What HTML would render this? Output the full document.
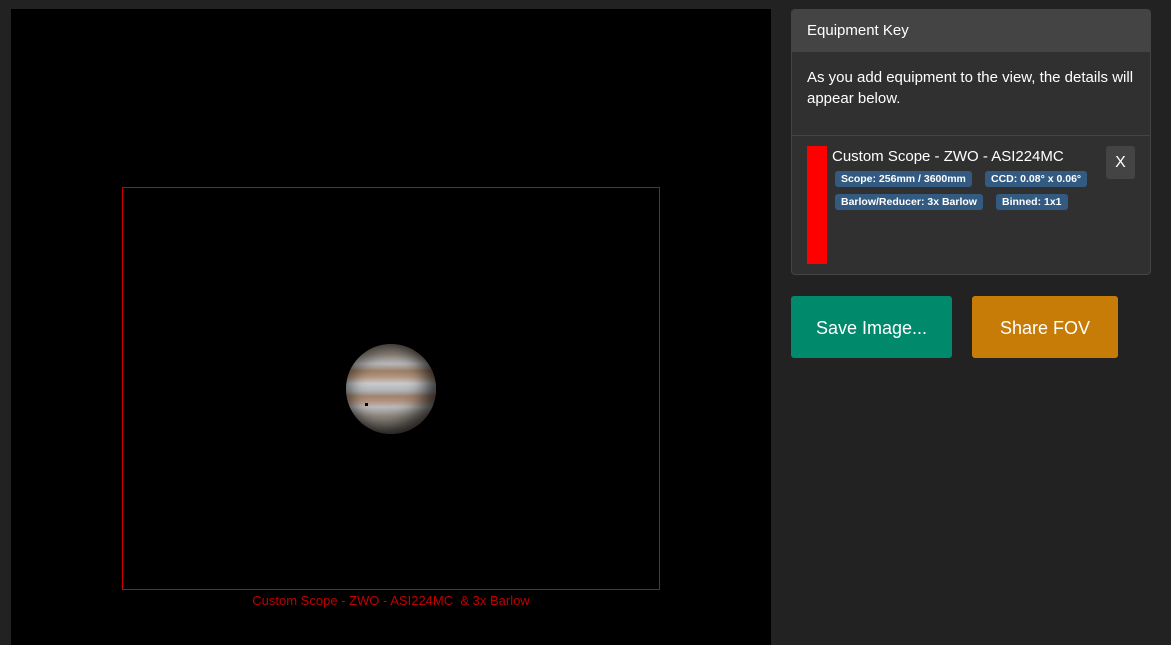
<!DOCTYPE html>
<html><head><style>
body{margin:0;width:1171px;height:645px;background:#222;font-family:"Liberation Sans",sans-serif;position:relative;overflow:hidden}
.cv{position:absolute;left:11px;top:9px;width:760px;height:636px;background:#000}
.fov{position:absolute;left:122px;top:187px;width:536px;height:401px;border:1px solid #d00000}
.lbl{position:absolute;left:122px;top:593px;width:538px;text-align:center;color:#c00000;font-size:13px}
.jup{position:absolute;left:346px;top:344px;width:90px;height:90px;border-radius:50%;
background:linear-gradient(180deg,#7a746c 0%,#948b80 12%,#b8b8bc 22%,#9c8068 30%,#b2927a 36%,#c8cacc 44%,#b0b2b6 52%,#a08470 58%,#b0907a 63%,#bcbcbc 70%,#969088 80%,#6d675f 100%);
box-shadow:inset -10px -6px 18px rgba(0,0,0,.7),inset 6px 4px 14px rgba(0,0,0,.4)}
.panel{position:absolute;left:791px;top:9px;width:358px;height:264px;background:#303030;border:1px solid #444;border-radius:4px;overflow:hidden;color:#fff}
.hd{height:42px;background:#444;line-height:42px;padding-left:15px;font-size:15px}
.desc{padding:15px 15px 16px;font-size:15px;line-height:21px;height:52px;border-bottom:1px solid #444}
.bar{position:absolute;left:15px;top:136px;width:20px;height:118px;background:#f00}
.name{position:absolute;left:40px;top:138px;font-size:15px}
.b{position:absolute;background:#335a80;color:#fff;font-size:10.5px;font-weight:bold;padding:1px 6px;border-radius:3px;line-height:14px}
.x{position:absolute;left:314px;top:136px;width:29px;height:33px;background:#444;border-radius:3px;text-align:center;line-height:33px;font-size:16px}
.btn{position:absolute;top:296px;height:62px;line-height:64px;color:#fff;font-size:18px;text-align:center;border-radius:3px}
</style></head><body>
<div class="cv"></div>
<div class="fov"></div>
<div class="jup"></div>
<div style="position:absolute;left:365px;top:403px;width:3px;height:3px;background:#000"></div>
<div class="lbl">Custom Scope - ZWO - ASI224MC &nbsp;&amp; 3x Barlow</div>
<div class="panel">
<div class="hd">Equipment Key</div>
<div class="desc">As you add equipment to the view, the details will appear below.</div>
<div class="bar"></div>
<div class="name">Custom Scope - ZWO - ASI224MC</div>
<div class="b" style="left:43px;top:161px">Scope: 256mm / 3600mm</div>
<div class="b" style="left:193px;top:161px">CCD: 0.08° x 0.06°</div>
<div class="b" style="left:43px;top:184px">Barlow/Reducer: 3x Barlow</div>
<div class="b" style="left:204px;top:184px">Binned: 1x1</div>
<div class="x">X</div>
</div>
<div class="btn" style="left:791px;width:161px;background:#00896b">Save Image...</div>
<div class="btn" style="left:972px;width:146px;background:#c67c07">Share FOV</div>
</body></html>
